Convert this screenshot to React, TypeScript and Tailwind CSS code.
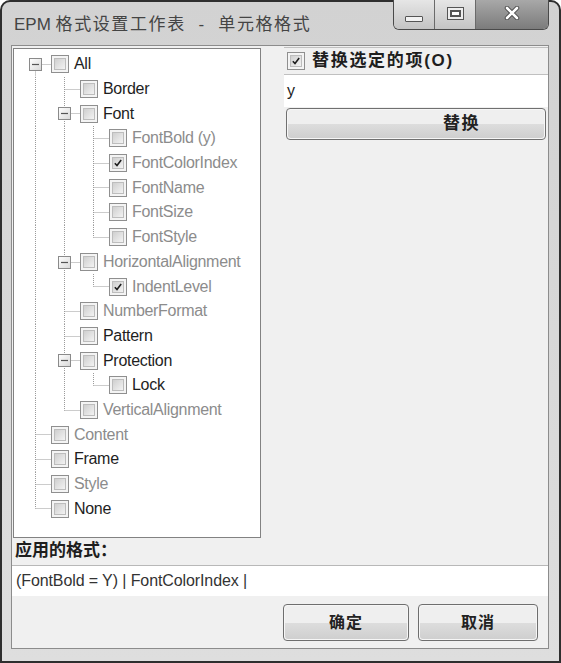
import React from 'react';

type Cell = 'pipe' | 'tee' | 'ell' | 'top';
interface Row {
  label: string;
  cells: Cell[];
  exp?: boolean;
  checked?: boolean;
  dark?: boolean;
}

const rows: Row[] = [
  { label: 'All', cells: ['top'], exp: true, dark: true },
  { label: 'Border', cells: ['pipe', 'tee'], dark: true },
  { label: 'Font', cells: ['pipe', 'tee'], exp: true, dark: true },
  { label: 'FontBold (y)', cells: ['pipe', 'pipe', 'tee'] },
  { label: 'FontColorIndex', cells: ['pipe', 'pipe', 'tee'], checked: true },
  { label: 'FontName', cells: ['pipe', 'pipe', 'tee'] },
  { label: 'FontSize', cells: ['pipe', 'pipe', 'tee'] },
  { label: 'FontStyle', cells: ['pipe', 'pipe', 'ell'] },
  { label: 'HorizontalAlignment', cells: ['pipe', 'tee'], exp: true },
  { label: 'IndentLevel', cells: ['pipe', 'pipe', 'ell'], checked: true },
  { label: 'NumberFormat', cells: ['pipe', 'tee'] },
  { label: 'Pattern', cells: ['pipe', 'tee'], dark: true },
  { label: 'Protection', cells: ['pipe', 'tee'], exp: true, dark: true },
  { label: 'Lock', cells: ['pipe', 'pipe', 'ell'], dark: true },
  { label: 'VerticalAlignment', cells: ['pipe', 'ell'] },
  { label: 'Content', cells: ['tee'] },
  { label: 'Frame', cells: ['tee'], dark: true },
  { label: 'Style', cells: ['tee'] },
  { label: 'None', cells: ['ell'], dark: true },
];

const LINE = '#9a9a9a';

function Connector({ type, exp }: { type: Cell; exp?: boolean }) {
  const x = 13.5;
  const mid = 12.5;
  return (
    <svg width={29} height="100%" viewBox="0 0 29 24.7" preserveAspectRatio="none" className="shrink-0 block">
      {type === 'pipe' && <line x1={x} y1={0} x2={x} y2={24.7} stroke={LINE} strokeDasharray="1 1" />}
      {type === 'tee' && (
        <>
          <line x1={x} y1={0} x2={x} y2={24.7} stroke={LINE} strokeDasharray="1 1" />
          <line x1={x} y1={mid} x2={29} y2={mid} stroke={LINE} strokeDasharray="1 1" />
        </>
      )}
      {type === 'ell' && (
        <>
          <line x1={x} y1={0} x2={x} y2={mid} stroke={LINE} strokeDasharray="1 1" />
          <line x1={x} y1={mid} x2={29} y2={mid} stroke={LINE} strokeDasharray="1 1" />
        </>
      )}
      {type === 'top' && (
        <>
          <line x1={x} y1={mid} x2={x} y2={24.7} stroke={LINE} strokeDasharray="1 1" />
          <line x1={x} y1={mid} x2={29} y2={mid} stroke={LINE} strokeDasharray="1 1" />
        </>
      )}
      {exp && (
        <>
          <defs>
            <linearGradient id="expg" x1="0" y1="0" x2="1" y2="1">
              <stop offset="0" stopColor="#ffffff" />
              <stop offset="1" stopColor="#d8d8d8" />
            </linearGradient>
          </defs>
          <rect x={7.5} y={6.5} width={12} height={12} fill="url(#expg)" stroke="#8a8a8a" />
          <line x1={10} y1={12.5} x2={17} y2={12.5} stroke="#555" strokeWidth={1.2} />
        </>
      )}
    </svg>
  );
}

function CheckBox({ checked }: { checked?: boolean }) {
  return (
    <div className="w-[18px] h-[18px] shrink-0 border border-[#8f8f8f] bg-[#f4f4f4] p-[2px]">
      <div className="w-full h-full bg-linear-to-br from-[#cfcfcf] to-[#f3f3f3] border border-[#bdbdbd] relative">
        {checked && (
          <svg viewBox="0 0 12 12" className="absolute inset-0 w-full h-full">
            <path d="M2.2 6.2 L4.8 9 L9.8 2.3" fill="none" stroke="#1e1e1e" strokeWidth={1.9} />
          </svg>
        )}
      </div>
    </div>
  );
}

function WinButton({ label, w }: { label: string; w: string }) {
  return (
    <div className={`${w} h-[37px] rounded-[4px] border border-[#6e6e6e] p-[1px] bg-[#f6f6f6]`}>
      <div className="w-full h-full rounded-[3px] flex flex-col overflow-hidden relative">
        <div className="h-1/2 bg-[#efefef]" />
        <div className="h-1/2 bg-linear-to-b from-[#dddddd] to-[#cfcfcf]" />
        <span className="absolute inset-0 flex items-center justify-center text-[16px] font-bold text-[#222] tracking-[1px]">
          {label}
        </span>
      </div>
    </div>
  );
}

export default function App() {
  const cjk = '"Liberation Sans", "Noto Sans CJK SC", sans-serif';
  return (
    <div className="w-[561px] h-[663px] bg-white overflow-hidden" style={{ fontFamily: cjk }}>
      <div className="w-full h-full rounded-t-[10px] border-[2px] border-[#2e2e2e] bg-linear-to-b from-[#d2d2d2] to-[#dedede] flex flex-col">
        {/* title bar */}
        <div className="h-[43px] flex items-start shrink-0">
          <div className="pl-[12px] pt-[10px] text-[17px] text-[#444] whitespace-pre">
            <span className="tracking-[0px]">EPM </span>
            <span className="tracking-[1.6px]">格式设置工作表  -  单元格格式</span>
          </div>
          <div className="ml-auto mr-[10px] -mt-[2px] flex h-[30px] rounded-b-[6px] border border-t-0 border-[#4a4a4a] overflow-hidden">
            <div className="w-[41px] h-full bg-linear-to-b from-[#e6e6e6] to-[#c4c4c4] border-r border-[#6a6a6a] flex items-center justify-center">
              <div className="w-[18px] h-[6px] mt-[8px] bg-[#f2f2f2] border border-[#555] rounded-[1px]" />
            </div>
            <div className="w-[41px] h-full bg-linear-to-b from-[#e6e6e6] to-[#c4c4c4] border-r border-[#6a6a6a] flex items-center justify-center">
              <div className="w-[17px] h-[13px] border border-[#555] bg-[#eeeeee] p-[2px] -mt-[3px]">
                <div className="w-full h-full border-[2px] border-[#555] bg-white" />
              </div>
            </div>
            <div className="w-[72px] h-full bg-linear-to-b from-[#a8a8a8] to-[#7c7c7c] flex items-center justify-center">
              <svg width="16" height="14" viewBox="0 0 16 14" className="-mt-[3px]">
                <path d="M3 2 L13 12 M13 2 L3 12" stroke="#4a4a4a" strokeWidth={4.5} strokeLinecap="round" />
                <path d="M3 2 L13 12 M13 2 L3 12" stroke="#ffffff" strokeWidth={2.6} strokeLinecap="round" />
              </svg>
            </div>
          </div>
        </div>

        {/* client area */}
        <div className="ml-[9px] mr-[10px] mb-[12px] flex-1 bg-[#f0f0f0] border border-[#8c8c8c] flex flex-col">
          <div className="flex pt-[2px]">
            {/* tree */}
            <div className="ml-[1px] w-[248px] h-[490px] border border-[#828282] bg-white pt-[3px] pl-[8px] shrink-0">
              {rows.map((r, i) => (
                <div key={i} className="h-[24.7px] flex items-center">
                  {r.cells.map((c, j) => (
                    <Connector key={j} type={c} exp={j === r.cells.length - 1 ? r.exp : false} />
                  ))}
                  <CheckBox checked={r.checked} />
                  <span
                    className={`ml-[5px] text-[16px] leading-none whitespace-nowrap tracking-[-0.3px] ${
                      r.dark ? 'text-[#1e1e1e]' : 'text-[#8c8c8c]'
                    }`}
                  >
                    {r.label}
                  </span>
                </div>
              ))}
            </div>
            {/* right panel */}
            <div className="ml-[23px] flex-1 -mt-[1px] flex flex-col">
              <div className="h-[28px] flex items-center pl-[3px] border-t border-b border-[#c0c0c0]">
                <CheckBox checked />
                <span className="ml-[7px] text-[17px] font-bold text-[#1e1e1e] tracking-[1.7px]">替换选定的项(O)</span>
              </div>
              <div className="h-[32px] bg-white flex items-center pl-[3px] text-[16px] text-[#222]">y</div>
              <div className="ml-[2px] mr-[2px] h-[32px] rounded-[4px] border border-[#707070] p-[1px] bg-[#f6f6f6] mt-[1px]">
                <div className="w-full h-full rounded-[3px] flex flex-col overflow-hidden relative">
                  <div className="h-1/2 bg-[#efefef]" />
                  <div className="h-1/2 bg-linear-to-b from-[#dddddd] to-[#cfcfcf]" />
                  <span className="absolute inset-y-0 left-[155px] flex items-center text-[17px] font-bold text-[#222] tracking-[1.5px]">
                    替换
                  </span>
                </div>
              </div>
            </div>
          </div>

          <div className="mt-[2px] pl-[3px] h-[21px] flex items-center text-[17px] font-bold text-[#1e1e1e] tracking-[0px]">
            应用的格式：
          </div>
          <div className="mt-[4px] h-[31px] bg-white border-t border-[#b8b8b8] flex items-center pl-[4px] text-[16px] text-[#333] tracking-[-0.1px]">
            (FontBold = Y) | FontColorIndex |
          </div>
          <div className="mt-[8px] flex justify-end gap-[9px] pr-[10px]">
            <WinButton label="确定" w="w-[126px]" />
            <WinButton label="取消" w="w-[120px]" />
          </div>
        </div>
      </div>
    </div>
  );
}
